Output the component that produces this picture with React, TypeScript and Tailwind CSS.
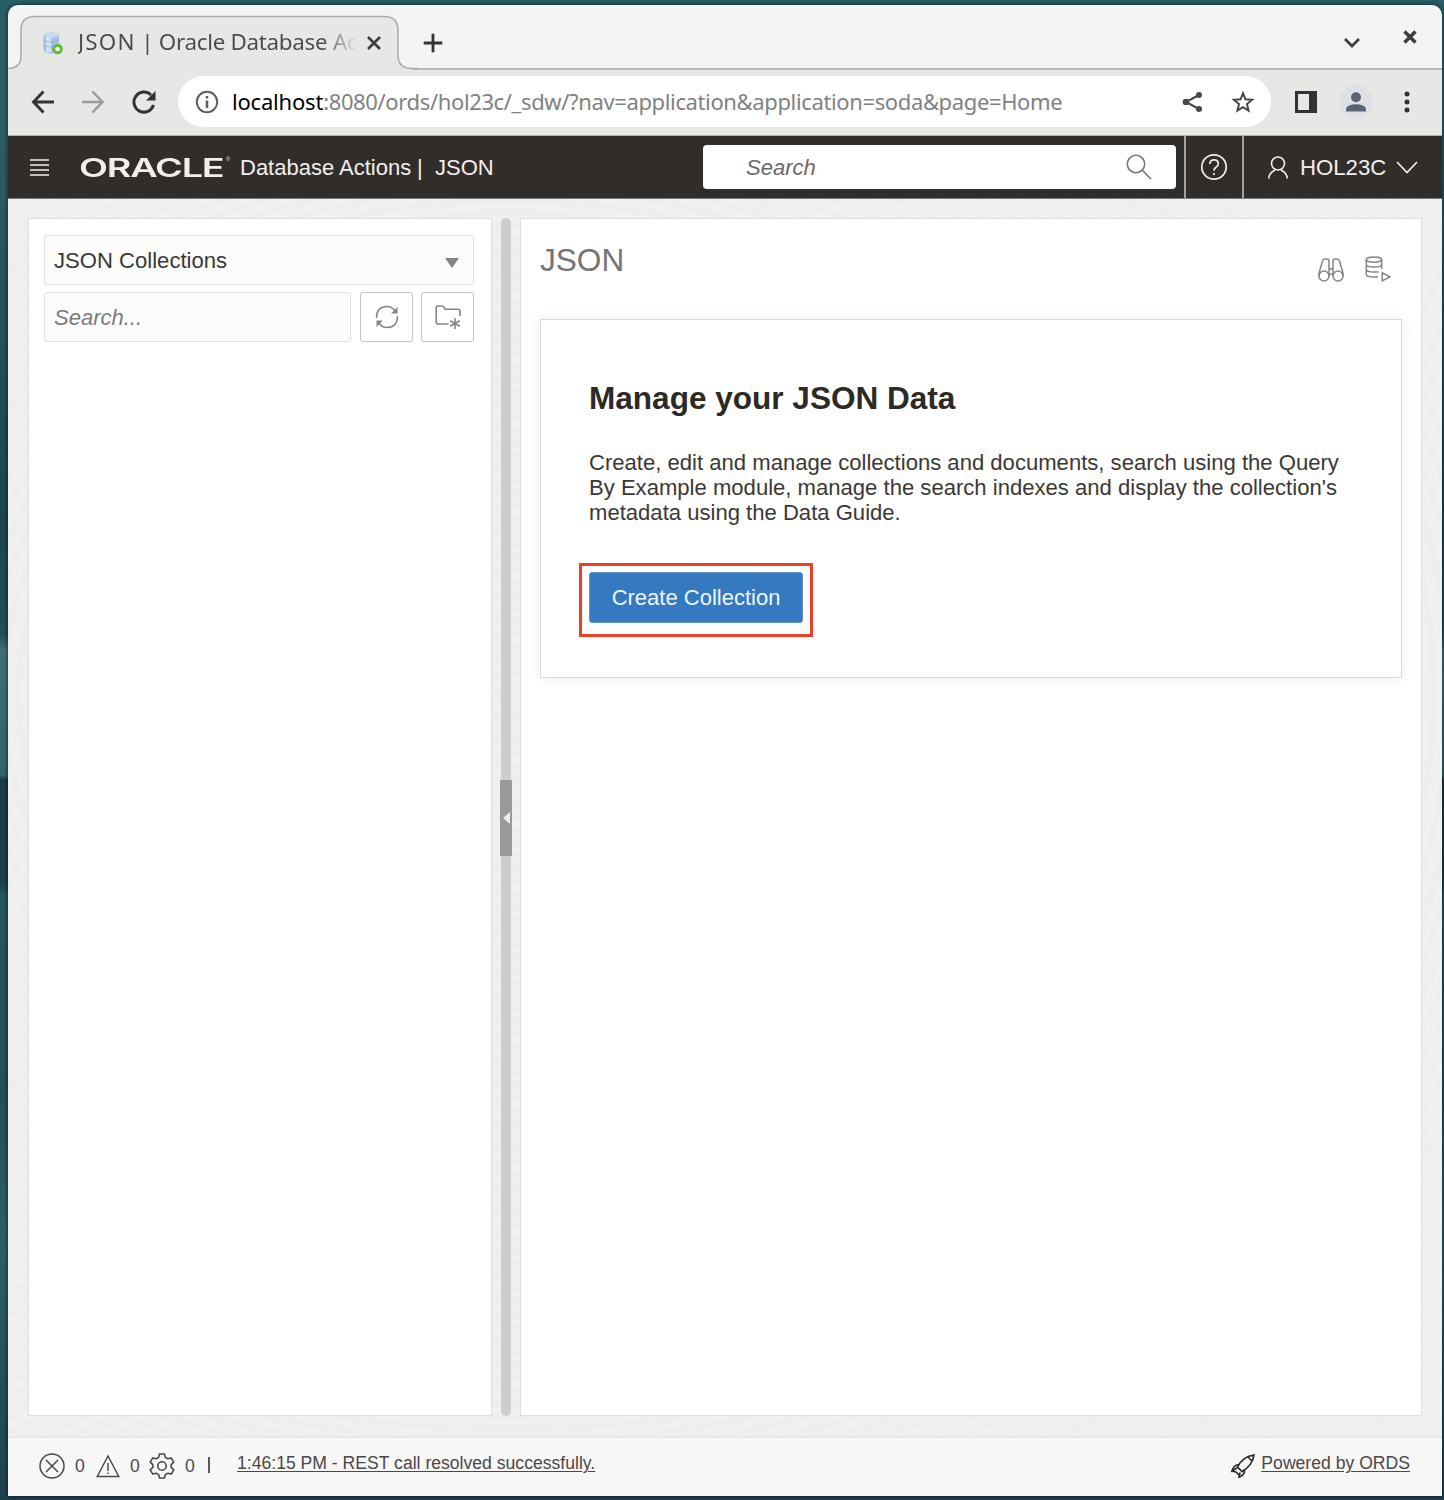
import React from "react";

type IconProps = { className?: string; children: React.ReactNode; box: string; sw?: number };

function Icon({ className = "", children, box, sw = 1.5 }: IconProps) {
  return (
    <svg viewBox={box} className={"block shrink-0 " + className} fill="none" stroke="currentColor" strokeWidth={sw}>
      {children}
    </svg>
  );
}

function TabStrip() {
  return (
    <div className="relative flex h-[65px] shrink-0 items-center bg-[#f4f4f4] pb-px shadow-[inset_0_-2px_0_#b9b9b8]">
      <svg className="absolute top-0 left-0 h-[65px] w-[410px]" viewBox="0 0 410 65" fill="none">
        <path d="M0 63.5Q13 63 13 51V25Q13 11.5 27 11.5H376Q390 11.5 390 25V50Q390 63.5 404 63.5V66H0Z" fill="#e7e7e5" />
        <path d="M0 63.5Q13 63 13 51V25Q13 11.5 27 11.5H376Q390 11.5 390 25V50Q390 63.5 404 63.5H410" stroke="#aaa" strokeWidth="1.5" />
      </svg>
      <div className="relative flex h-full w-full items-center pt-[11px]">
        <svg className="ml-[34px] h-[24px] w-[22px]" viewBox="0 0 22 24">
          <path d="M1.5 4Q9-1 17 4V20Q9 25 1.5 20Z" fill="#a8c0e6" />
          <path d="M4 4V21H9V4Z" fill="#d5e2f6" />
          <ellipse cx="9.2" cy="4" rx="7.7" ry="2.8" fill="#c9d8f1" />
          <path d="M1.5 9Q9 13 17 9M1.5 14Q9 18 17 14" fill="none" stroke="#8fabdd" strokeWidth="0.8" />
          <circle cx="15.6" cy="18" r="3.8" fill="#fff" stroke="#60bd35" strokeWidth="3" />
        </svg>
        <span className="mb-px ml-[14px] w-[278px] bg-linear-to-r from-[#484b4d] from-88% to-transparent to-100% bg-clip-text font-['Noto_Sans'] text-[22.4px] leading-8 tracking-[-0.3px] whitespace-nowrap text-transparent">
          <span className="tracking-[1.2px]">JSON</span> | Oracle Database Ac
        </span>
        <Icon box="0 0 14 14" sw={2.6} className="ml-[11px] h-[14px] w-[14px] text-[#393d3f]"><path d="M1 1L13 13M13 1L1 13" /></Icon>
        <Icon box="0 0 20 20" sw={2.8} className="ml-[42px] h-[20px] w-[20px] text-[#2e3436]"><path d="M10 .7V19.3M.7 10H19.3" /></Icon>
        <Icon box="0 0 18 12" sw={2.8} className="mr-[2px] ml-auto h-[12px] w-[18px] text-[#3c4042]"><path d="M2 2L9 9L16 2" /></Icon>
        <Icon box="0 0 14 14" sw={3.4} className="mr-[25px] mb-[12px] ml-[40px] h-[14px] w-[14px] text-[#393d3f]"><path d="M1.5 1.5L12.5 12.5M12.5 1.5L1.5 12.5" /></Icon>
      </div>
    </div>
  );
}

function AddressBar() {
  return (
    <div className="flex h-[66px] shrink-0 items-center border-b border-[#b5b5b3] bg-[#e7e7e5] pb-[2px] font-['Noto_Sans']">
      <Icon box="0 0 24 24" sw={2.9} className="ml-[23px] h-[24px] w-[24px] text-[#2e3436]"><path d="M23 12H3M12.5 1.5L2.5 12L12.5 22.5" /></Icon>
      <Icon box="0 0 24 24" sw={2.5} className="ml-[26px] h-[24px] w-[24px] text-[#989b9b]"><path d="M1 12H21M11.5 1.5L21.5 12L11.5 22.5" /></Icon>
      <Icon box="0 0 24 24" sw={3} className="ml-[27px] h-[24px] w-[24px] text-[#2e3436]">
        <path d="M21.5 15A10 10 0 1 1 19 5" />
        <path d="M23.5 1V10.5H14Z" fill="currentColor" stroke="none" />
      </Icon>
      <div className="ml-[22px] flex h-[51px] w-[1093px] items-center rounded-full bg-white">
        <Icon box="0 0 24 24" sw={2} className="ml-[17px] h-[24px] w-[24px] text-[#5a6063]">
          <circle cx="12" cy="12" r="10.2" />
          <path d="M12 10.5V18M12 6V8.5" strokeWidth="2.6" />
        </Icon>
        <span className="mb-[2px] ml-[13px] w-[939px] text-[22px] leading-8 tracking-[-0.37px] whitespace-nowrap text-[#7f8283]">
          <span className="tracking-[-0.2px] text-black">localhost</span>:8080/ords/hol23c/_sdw/?nav=application&amp;application=soda&amp;page=Home
        </span>
        <Icon box="0 0 22 22" sw={2} className="ml-[11px] h-[22px] w-[22px] text-[#454849]">
          <path d="M17 4L4 11L17 18" />
          <circle cx="17" cy="4" r="3" fill="currentColor" stroke="none" />
          <circle cx="4" cy="11" r="3.3" fill="currentColor" stroke="none" />
          <circle cx="17" cy="18" r="3" fill="currentColor" stroke="none" />
        </Icon>
        <Icon box="0 0 24 24" sw={2} className="ml-[27px] h-[24px] w-[24px] text-[#454849]">
          <path d="M12 3.2L14.4 9.3L21.1 9.8L16 14L17.6 20.6L12 17.1L6.4 20.6L8 14L2.9 9.8L9.6 9.3Z" />
        </Icon>
      </div>
      <Icon box="0 0 22 22" className="ml-[24px] h-[22px] w-[22px] text-[#2e3436]">
        <path fillRule="evenodd" d="M0 0H22V22H0ZM3 3V19H14V3Z" fill="currentColor" stroke="none" />
      </Icon>
      <div className="ml-[22px] flex h-[34px] w-[34px] items-center justify-center rounded-full bg-[#dee0e6]">
        <Icon box="0 0 20 20" className="h-[20px] w-[20px] text-[#5a6275]">
          <circle cx="10" cy="5.2" r="5" fill="currentColor" stroke="none" />
          <path d="M0 19.5V17Q1 12.4 10 12.2Q19 12.4 20 17V19.5Z" fill="currentColor" stroke="none" />
        </Icon>
      </div>
      <Icon box="0 0 6 22" className="ml-[31px] h-[22px] w-[6px] text-[#2e3436]">
        <circle cx="3" cy="3" r="2.5" fill="currentColor" stroke="none" />
        <circle cx="3" cy="11" r="2.5" fill="currentColor" stroke="none" />
        <circle cx="3" cy="19" r="2.5" fill="currentColor" stroke="none" />
      </Icon>
    </div>
  );
}

function AppHeader() {
  return (
    <header className="flex h-[63px] shrink-0 items-center border-b border-[#7b7977] bg-[#312d2a] text-[22px] text-[#f1efed]">
      <Icon box="0 0 19 17" sw={1.5} className="ml-[22px] h-[17px] w-[19px]"><path d="M0 1H19M0 6H19M0 11H19M0 16H19" /></Icon>
      <div className="ml-[30px] flex h-[30px] w-[151px] items-center">
        <span className="mt-px w-[100px] origin-left scale-x-[1.48] font-['Inter'] text-[25.5px] leading-[30px] font-semibold tracking-[-0.8px]">ORACLE</span>
        <span className="mb-[14px] ml-auto text-[5px]">®</span>
      </div>
      <span className="ml-[10px] w-[172px] whitespace-nowrap">Database Actions</span>
      <span className="ml-[5px] w-[18px]">|</span>
      <span className="whitespace-nowrap">JSON</span>
      <div className="ml-auto flex h-[44px] w-[473px] items-center rounded-[4px] bg-white pr-[24px] pl-[43px]">
        <span className="text-[#6b6966] italic">Search</span>
        <Icon box="0 0 26 26" sw={1.6} className="ml-auto h-[26px] w-[26px] text-[#777472]">
          <circle cx="10" cy="10" r="8.7" />
          <path d="M16.3 16.3L25 25" />
        </Icon>
      </div>
      <div className="ml-[8px] flex h-full w-[60px] items-center justify-center border-x-2 border-[#a3a09d]">
        <Icon box="0 0 28 28" sw={1.7} className="h-[28px] w-[28px]">
          <circle cx="14" cy="14" r="12.2" />
          <path d="M9.8 11Q10 6.8 14 6.8Q18.3 6.8 18.3 10.7Q18.3 12.8 16 14.2Q14 15.5 14 17.7M14 20V22" />
        </Icon>
      </div>
      <Icon box="0 0 20 23" sw={1.6} className="ml-[24px] h-[23px] w-[20px]">
        <circle cx="10" cy="7.5" r="6.5" />
        <path d="M.8 22.5Q1 17 7 14M19.2 22.5Q19 17 13 14" />
      </Icon>
      <span className="mt-[2px] ml-[12px] w-[88px] text-[22.2px]">HOL23C</span>
      <Icon box="0 0 22 13" sw={1.7} className="mt-px mr-[24px] ml-[8px] h-[13px] w-[22px]"><path d="M1 1L11 11.5L21 1" /></Icon>
    </header>
  );
}

function Sidebar() {
  return (
    <aside className="w-[464px] border border-[#dededd] bg-white pt-[16px] pr-[17px] pl-[15px]">
      <div className="flex h-[50px] items-center justify-between rounded-[3px] border border-[#e0e0e0] bg-[#fcfcfc] pr-[14px] pl-[9px]">
        <span className="mt-[2px] text-[22.1px] text-[#3b3835]">JSON Collections</span>
        <Icon box="0 0 14 10" className="mt-[5px] h-[10px] w-[14px] text-[#858585]"><path d="M0 0H14L7 10Z" fill="currentColor" stroke="none" /></Icon>
      </div>
      <div className="mt-[7px] flex h-[50px]">
        <div className="flex w-[307px] items-center rounded-[3px] border border-[#e0e0e0] bg-[#fcfcfc] pl-[9px] text-[22px] text-[#7b7b7b] italic">Search...</div>
        <button className="ml-[9px] flex w-[53px] items-center justify-center rounded-[3px] border border-[#c4c4c4]">
          <Icon box="0 0 24 24" sw={1.5} className="h-[24px] w-[24px] text-[#858585]">
            <path d="M1.5 13Q1.5 1.5 12 1.5Q17 1.5 20 6M22.5 11Q22.5 22.5 12 22.5Q7 22.5 4 18" />
            <path d="M22.5 2V8.5H16ZM1.5 22V15.5H8Z" fill="currentColor" stroke="none" />
          </Icon>
        </button>
        <button className="ml-[8px] flex w-[53px] items-center justify-center rounded-[3px] border border-[#c4c4c4]">
          <Icon box="0 0 26 26" sw={1.6} className="h-[26px] w-[26px] text-[#858585]">
            <path d="M13.5 20H3Q1.2 20 1.2 18V4Q1.2 2 3 2H7Q8.5 2 9.2 3.4L10.2 5.2H23Q25 5.2 25 7V12" />
            <path d="M20 14V25M15.2 16.8L24.8 22.2M24.8 16.8L15.2 22.2" />
          </Icon>
        </button>
      </div>
    </aside>
  );
}

function Splitter() {
  return (
    <div className="ml-[7px] flex w-[14px] items-center justify-center">
      <div className="flex h-full w-[10px] items-center justify-center rounded-full bg-[#cdcdcd] pt-[2px]">
        <div className="flex h-[76px] w-[12px] shrink-0 items-center justify-center bg-[#999]">
          <Icon box="0 0 7 12" className="h-[12px] w-[7px] text-[#eee]"><path d="M7 0V12L0 6Z" fill="currentColor" stroke="none" /></Icon>
        </div>
      </div>
    </div>
  );
}

function Content() {
  return (
    <main className="ml-[7px] w-[902px] border border-[#dededd] bg-white px-[19px] pt-[22px]">
      <div className="flex h-[77px]">
        <h1 className="text-[31.6px] leading-[38px] text-[#757575]">JSON</h1>
        <Icon box="0 0 26 24" sw={1.5} className="mt-[17px] ml-auto h-[24px] w-[26px] text-[#858585]">
          <circle cx="6" cy="18" r="5" />
          <circle cx="20" cy="18" r="5" />
          <path d="M1 18V15L4.5 3Q5 1 7 1H9Q11 1 11 3V18M25 18V15L21.5 3Q21 1 19 1H17Q15 1 15 3V18M11 11H15M11 16H15" />
        </Icon>
        <Icon box="0 0 26 26" sw={1.5} className="mt-[15px] mr-[11px] ml-[21px] h-[26px] w-[26px] text-[#858585]">
          <ellipse cx="9" cy="3.6" rx="7.7" ry="2.6" />
          <path d="M1.3 3.6V18.5Q1.3 21 9 21H13M16.7 3.6V13M1.3 8.5Q1.3 11 9 11T16.7 8.5M1.3 13.5Q1.3 16 9 16H13.5M17.2 16.8V24.8L25 20.8Z" />
        </Icon>
      </div>
      <section className="mt-px h-[359px] w-[862px] border border-[#d9d9d8] pl-[48px] shadow-[0_0_14px_rgba(0,0,0,0.07)]">
        <h2 className="mt-[59px] text-[31.55px] leading-[38px] font-bold text-[#2d2926]">Manage your JSON Data</h2>
        <p className="mt-[33px] text-[22.08px] leading-[25px] whitespace-nowrap text-[#3b3835]">
          Create, edit and manage collections and documents, search using the Query
          <br />
          By Example module, manage the search indexes and display the collection's
          <br />
          metadata using the Data Guide.
        </p>
        <div className="mt-[38px] -ml-[10px] h-[74px] w-[234px] border-3 border-[#ee4027] p-[7px] pt-[6px]">
          <button className="h-[51px] w-[214px] rounded-[3px] border border-[#5b96cd] bg-[#3579c0] text-[22px] whitespace-nowrap text-[#edf5fc]">Create Collection</button>
        </div>
      </section>
    </main>
  );
}

function StatusBar() {
  return (
    <footer className="flex h-[60px] shrink-0 items-center border-t-2 border-[#e8e8e7] bg-[#f7f7f7] pb-[2px] text-[17.6px] text-[#4b4947]">
      <Icon box="0 0 26 26" sw={1.5} className="ml-[31px] h-[26px] w-[26px]">
        <circle cx="13" cy="13" r="12" />
        <path d="M7 7L19 19M19 7L7 19" />
      </Icon>
      <span className="ml-[10px] w-[13px]">0</span>
      <Icon box="0 0 24 24" sw={1.5} className="ml-[8px] h-[24px] w-[24px]">
        <path d="M12 2L22.8 22.5H1.2ZM12 9V17M12 18.5V20" />
      </Icon>
      <span className="ml-[10px] w-[13px]">0</span>
      <Icon box="0 0 26 26" sw={1.6} className="ml-[6px] h-[26px] w-[26px]">
        <circle cx="13" cy="13" r="4.2" />
        <path d="M10.5 1H15.5L16.3 4.4L18.8 5.8L22.2 4.9L24.8 9.2L22.2 11.6V14.4L24.8 16.8L22.2 21.1L18.8 20.2L16.3 21.6L15.5 25H10.5L9.7 21.6L7.2 20.2L3.8 21.1L1.2 16.8L3.8 14.4V11.6L1.2 9.2L3.8 4.9L7.2 5.8L9.7 4.4Z" strokeLinejoin="round" />
      </Icon>
      <span className="ml-[10px] w-[13px]">0</span>
      <div className="mb-[3px] ml-[10px] h-[16px] w-[2px] bg-[#5b5957]" />
      <a className="mb-[5px] ml-[27px] whitespace-nowrap underline underline-offset-2">1:46:15 PM - REST call resolved successfully.</a>
      <Icon box="0 0 24 24" sw={1.7} className="ml-auto h-[24px] w-[24px] text-[#2e2c2a]">
        <path d="M6.5 13C10 6 15 2 23 1C22 9 17 14 11 17.5ZM17 3L21 7M8 10.5Q3 10.5 1 17L6 14M13.5 16Q14 21 8 23.2L9 18.5M5 14.5L1 17L5 18L8 21" />
      </Icon>
      <a className="mr-[32px] mb-[5px] ml-[6px] whitespace-nowrap underline underline-offset-2">Powered by ORDS</a>
    </footer>
  );
}

export default function App() {
  return (
    <div className="h-[1500px] w-[1444px] bg-[linear-gradient(180deg,#2a5d66_0,#2a5d66_150px,#1d4450_520px,#244e59_635px,#3d7078_650px,#2f646c_775px,#193c47_780px,#1c414c_885px,#245661_895px,#244f59_1100px,#2a606a_1240px,#1e424d_1500px)] pt-[5px] pr-[2px] pb-[4px] pl-[8px] font-['Liberation_Sans',sans-serif]">
      <div className="flex h-[1491px] flex-col overflow-hidden rounded-t-[10px] shadow-[0_0_4px_rgba(0,0,0,0.7)]">
        <TabStrip />
        <AddressBar />
        <AppHeader />
        <div className="flex min-h-0 flex-1 bg-[repeating-radial-gradient(ellipse_at_35%_40%,#f1f0ee_0_7px,#eeedeb_10px_13px,#f1f0ee_16px)] pt-[19px] pb-[20px] pl-[20px]">
          <Sidebar />
          <Splitter />
          <Content />
        </div>
        <StatusBar />
      </div>
    </div>
  );
}
